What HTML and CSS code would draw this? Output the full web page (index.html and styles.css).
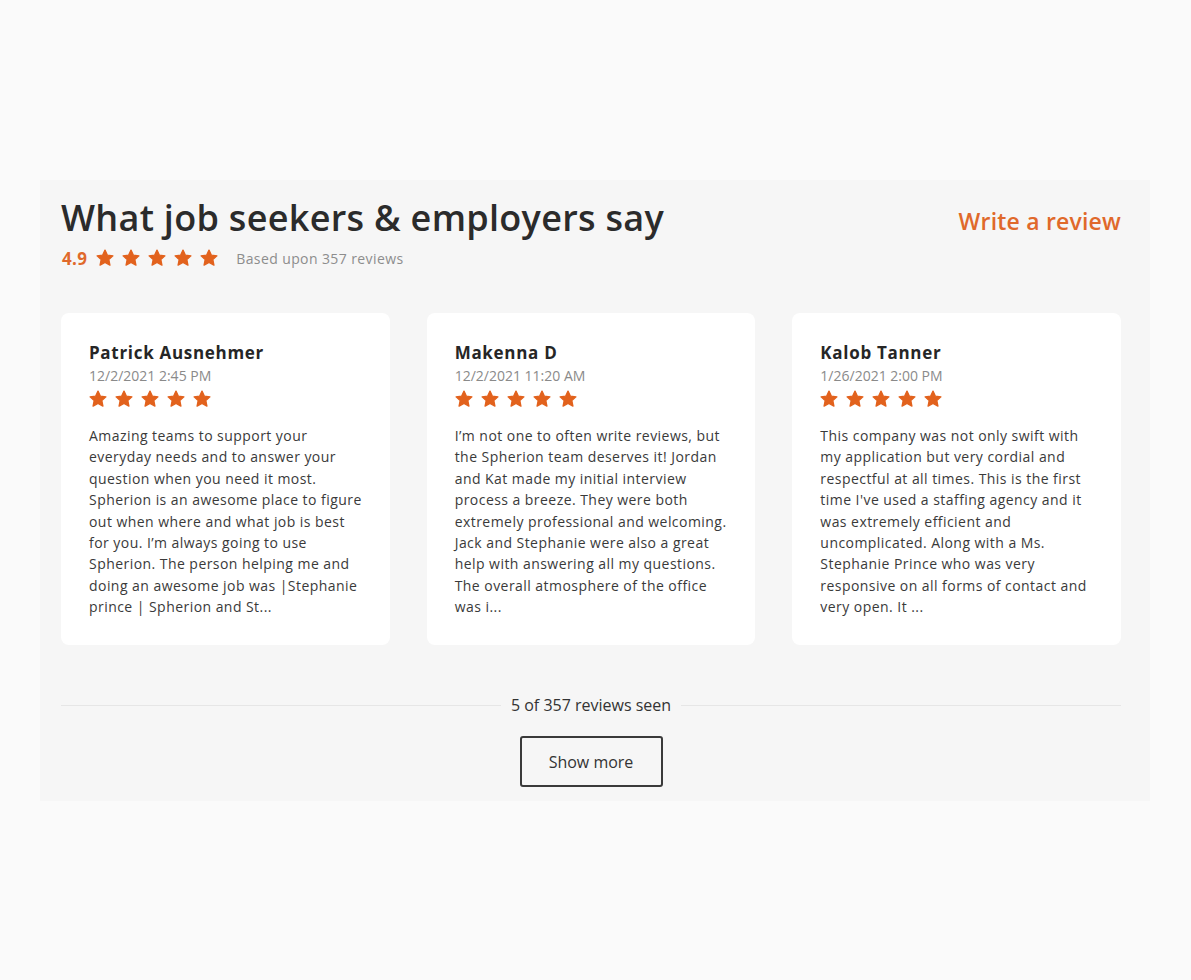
FILE: index.html
```html
<!DOCTYPE html>
<html lang="en">
  <head>
    <meta charset="UTF-8" />
    <meta name="viewport" content="width=device-width, initial-scale=1.0" />
    <title>Reviews</title>
    <link rel="stylesheet" href="styles.css">
  </head>
  <body>
    <section class="reviews">
      <!-- 상단 제목 + 평점 -->
      <header class="reviews_head">
        <div class="head_left">
          <h2 class="title">What job seekers &amp; employers say</h2>
          <div class="rating">
            <span class="score">4.9</span>
            <span class="stars">
              <svg viewBox="0 0 24 24"><polygon points="12,2.5 14.9,8.6 21.5,9.4 16.6,13.9 17.9,20.5 12,17.2 6.1,20.5 7.4,13.9 2.5,9.4 9.1,8.6"/></svg>
              <svg viewBox="0 0 24 24"><polygon points="12,2.5 14.9,8.6 21.5,9.4 16.6,13.9 17.9,20.5 12,17.2 6.1,20.5 7.4,13.9 2.5,9.4 9.1,8.6"/></svg>
              <svg viewBox="0 0 24 24"><polygon points="12,2.5 14.9,8.6 21.5,9.4 16.6,13.9 17.9,20.5 12,17.2 6.1,20.5 7.4,13.9 2.5,9.4 9.1,8.6"/></svg>
              <svg viewBox="0 0 24 24"><polygon points="12,2.5 14.9,8.6 21.5,9.4 16.6,13.9 17.9,20.5 12,17.2 6.1,20.5 7.4,13.9 2.5,9.4 9.1,8.6"/></svg>
              <svg viewBox="0 0 24 24"><polygon points="12,2.5 14.9,8.6 21.5,9.4 16.6,13.9 17.9,20.5 12,17.2 6.1,20.5 7.4,13.9 2.5,9.4 9.1,8.6"/></svg>
            </span>
            <span class="based">Based upon 357 reviews</span>
          </div>
        </div>
        <a href="" class="write">Write a review</a>
      </header>

      <!-- 리뷰 카드 -->
      <div class="cards">
        <article class="card">
          <h3 class="name">Patrick Ausnehmer</h3>
          <div class="date">12/2/2021 2:45 PM</div>
          <div class="stars">
            <svg viewBox="0 0 24 24"><polygon points="12,2.5 14.9,8.6 21.5,9.4 16.6,13.9 17.9,20.5 12,17.2 6.1,20.5 7.4,13.9 2.5,9.4 9.1,8.6"/></svg>
            <svg viewBox="0 0 24 24"><polygon points="12,2.5 14.9,8.6 21.5,9.4 16.6,13.9 17.9,20.5 12,17.2 6.1,20.5 7.4,13.9 2.5,9.4 9.1,8.6"/></svg>
            <svg viewBox="0 0 24 24"><polygon points="12,2.5 14.9,8.6 21.5,9.4 16.6,13.9 17.9,20.5 12,17.2 6.1,20.5 7.4,13.9 2.5,9.4 9.1,8.6"/></svg>
            <svg viewBox="0 0 24 24"><polygon points="12,2.5 14.9,8.6 21.5,9.4 16.6,13.9 17.9,20.5 12,17.2 6.1,20.5 7.4,13.9 2.5,9.4 9.1,8.6"/></svg>
            <svg viewBox="0 0 24 24"><polygon points="12,2.5 14.9,8.6 21.5,9.4 16.6,13.9 17.9,20.5 12,17.2 6.1,20.5 7.4,13.9 2.5,9.4 9.1,8.6"/></svg>
          </div>
          <p class="text">Amazing teams to support your<br>everyday needs and to answer your<br>question when you need it most.<br>Spherion is an awesome place to figure<br>out when where and what job is best<br>for you. I’m always going to use<br>Spherion. The person helping me and<br>doing an awesome job was |Stephanie<br>prince | Spherion and St...</p>
        </article>
        <article class="card">
          <h3 class="name">Makenna D</h3>
          <div class="date">12/2/2021 11:20 AM</div>
          <div class="stars">
            <svg viewBox="0 0 24 24"><polygon points="12,2.5 14.9,8.6 21.5,9.4 16.6,13.9 17.9,20.5 12,17.2 6.1,20.5 7.4,13.9 2.5,9.4 9.1,8.6"/></svg>
            <svg viewBox="0 0 24 24"><polygon points="12,2.5 14.9,8.6 21.5,9.4 16.6,13.9 17.9,20.5 12,17.2 6.1,20.5 7.4,13.9 2.5,9.4 9.1,8.6"/></svg>
            <svg viewBox="0 0 24 24"><polygon points="12,2.5 14.9,8.6 21.5,9.4 16.6,13.9 17.9,20.5 12,17.2 6.1,20.5 7.4,13.9 2.5,9.4 9.1,8.6"/></svg>
            <svg viewBox="0 0 24 24"><polygon points="12,2.5 14.9,8.6 21.5,9.4 16.6,13.9 17.9,20.5 12,17.2 6.1,20.5 7.4,13.9 2.5,9.4 9.1,8.6"/></svg>
            <svg viewBox="0 0 24 24"><polygon points="12,2.5 14.9,8.6 21.5,9.4 16.6,13.9 17.9,20.5 12,17.2 6.1,20.5 7.4,13.9 2.5,9.4 9.1,8.6"/></svg>
          </div>
          <p class="text">I’m not one to often write reviews, but<br>the Spherion team deserves it! Jordan<br>and Kat made my initial interview<br>process a breeze. They were both<br>extremely professional and welcoming.<br>Jack and Stephanie were also a great<br>help with answering all my questions.<br>The overall atmosphere of the office<br>was i...</p>
        </article>
        <article class="card">
          <h3 class="name">Kalob Tanner</h3>
          <div class="date">1/26/2021 2:00 PM</div>
          <div class="stars">
            <svg viewBox="0 0 24 24"><polygon points="12,2.5 14.9,8.6 21.5,9.4 16.6,13.9 17.9,20.5 12,17.2 6.1,20.5 7.4,13.9 2.5,9.4 9.1,8.6"/></svg>
            <svg viewBox="0 0 24 24"><polygon points="12,2.5 14.9,8.6 21.5,9.4 16.6,13.9 17.9,20.5 12,17.2 6.1,20.5 7.4,13.9 2.5,9.4 9.1,8.6"/></svg>
            <svg viewBox="0 0 24 24"><polygon points="12,2.5 14.9,8.6 21.5,9.4 16.6,13.9 17.9,20.5 12,17.2 6.1,20.5 7.4,13.9 2.5,9.4 9.1,8.6"/></svg>
            <svg viewBox="0 0 24 24"><polygon points="12,2.5 14.9,8.6 21.5,9.4 16.6,13.9 17.9,20.5 12,17.2 6.1,20.5 7.4,13.9 2.5,9.4 9.1,8.6"/></svg>
            <svg viewBox="0 0 24 24"><polygon points="12,2.5 14.9,8.6 21.5,9.4 16.6,13.9 17.9,20.5 12,17.2 6.1,20.5 7.4,13.9 2.5,9.4 9.1,8.6"/></svg>
          </div>
          <p class="text">This company was not only swift with<br>my application but very cordial and<br>respectful at all times. This is the first<br>time I've used a staffing agency and it<br>was extremely efficient and<br>uncomplicated. Along with a Ms.<br>Stephanie Prince who was very<br>responsive on all forms of contact and<br>very open. It ...</p>
        </article>
      </div>

      <!-- 하단 카운트 + 더보기 -->
      <footer class="reviews_foot">
        <div class="seen"><span>5 of 357 reviews seen</span></div>
        <button class="more">Show more</button>
      </footer>
    </section>
  </body>
</html>
```

FILE: styles.css
```css
* {
  box-sizing: border-box;
}
body {
  margin: 0;
  background-color: #fafafa;
  font-family: "Open Sans", "Noto Sans", sans-serif;
  color: #333;
}
a {
  text-decoration: none;
}
h2,
h3,
p {
  margin: 0;
}

.reviews {
  width: 1110px;
  margin: 180px 0 0 40px;
  padding: 16px 29px 14px 21px;
  background-color: #f6f6f6;
}

/* 헤더 */
.reviews_head {
  display: flex;
  justify-content: space-between;
  align-items: flex-start;
}
.reviews_head .title {
  font-size: 36px;
  line-height: 44px;
  font-weight: 600;
  color: #2b2b2b;
  letter-spacing: 0.3px;
}
.reviews_head .write {
  margin-top: 9px;
  font-size: 23px;
  line-height: 32px;
  font-weight: 600;
  color: #e0692b;
  letter-spacing: 0.2px;
}
.rating {
  display: flex;
  align-items: center;
  height: 30px;
  margin-top: 3px;
  padding-left: 1px;
}
.rating .score {
  font-size: 17px;
  font-weight: 700;
  color: #e0692b;
  margin-right: 8px;
  letter-spacing: 0.3px;
}
.stars {
  display: flex;
  gap: 6px;
}
.stars svg {
  width: 20px;
  height: 20px;
  fill: #e2621d;
  stroke: #e2621d;
  stroke-width: 1.6;
  stroke-linejoin: round;
}
.rating .based {
  margin-left: 17px;
  font-size: 14px;
  color: #8d8d8d;
  letter-spacing: 0.4px;
}

/* 카드 */
.cards {
  display: flex;
  gap: 37px;
  margin-top: 40px;
}
.card {
  width: 329px;
  height: 332px;
  padding: 29px 12px 0 28px;
  background-color: #fff;
  border-radius: 8px;
}
.card .name {
  font-size: 17px;
  line-height: 22px;
  font-weight: 700;
  color: #262626;
  letter-spacing: 0.7px;
}
.card .date {
  font-size: 14px;
  line-height: 24px;
  color: #8a8a8a;
}
.card .stars {
  margin-top: 1px;
  margin-left: -1px;
}
.card .text {
  margin-top: 16px;
  font-size: 14px;
  line-height: 21.4px;
  color: #3a3a3a;
  letter-spacing: 0.45px;
  white-space: nowrap;
}

/* 하단 */
.reviews_foot {
  margin-top: 49px;
  display: flex;
  flex-direction: column;
  align-items: center;
}
.seen {
  width: 100%;
  display: flex;
  align-items: center;
  gap: 10px;
  font-size: 16px;
  color: #333;
}
.seen::before,
.seen::after {
  content: "";
  flex: 1;
  height: 1px;
  background-color: #e6e6e6;
}
.more {
  margin-top: 20px;
  width: 143px;
  height: 51px;
  background: none;
  border: 2px solid #3a3a3a;
  border-radius: 3px;
  font-family: inherit;
  font-size: 16px;
  color: #333;
}
```
